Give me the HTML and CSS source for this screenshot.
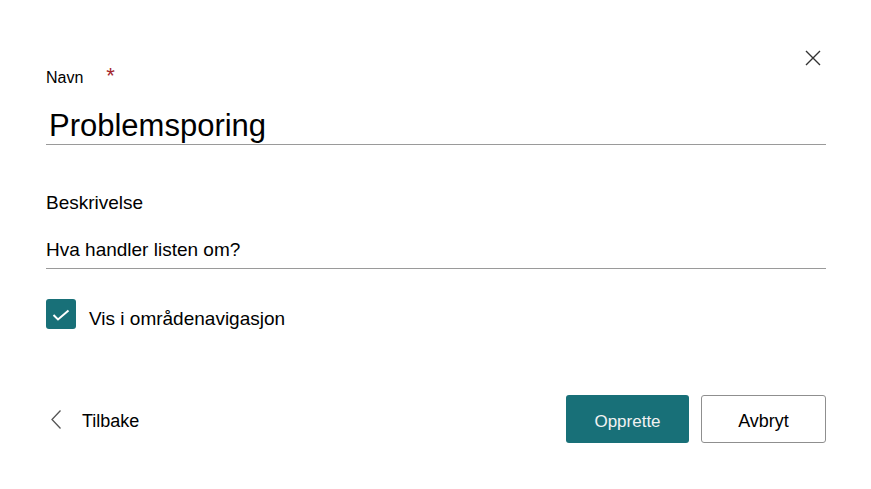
FILE: index.html
```html
<!DOCTYPE html>
<html lang="no">
<head>
<meta charset="utf-8">
<title>Opprett liste</title>
<link rel="stylesheet" href="styles.css">
</head>
<body>
<div class="dialog">
  <button class="close" aria-label="Lukk">
    <svg width="16" height="16" viewBox="0 0 16 16"><path d="M1 1L15 15M15 1L1 15" stroke="#333" stroke-width="1.4" fill="none"/></svg>
  </button>
  <div class="label-row"><span class="label">Navn</span><span class="req">*</span></div>
  <div class="field field-name">Problemsporing</div>
  <div class="label label-desc">Beskrivelse</div>
  <div class="field field-desc">Hva handler listen om?</div>
  <div class="check-row">
    <span class="checkbox">
      <svg width="30" height="30" viewBox="0 0 30 30"><polyline points="7.5,16 12,20.5 22.5,11.5" stroke="#fff" stroke-width="2" fill="none"/></svg>
    </span>
    <span class="check-text">Vis i områdenavigasjon</span>
  </div>
  <div class="footer">
    <button class="back">
      <svg width="10" height="19" viewBox="0 0 10 19"><polyline points="9.5,0.5 1,9.5 9.5,18.5" stroke="#555" stroke-width="1.3" fill="none"/></svg>
      <span>Tilbake</span>
    </button>
    <div class="actions">
      <button class="btn primary">Opprette</button>
      <button class="btn secondary">Avbryt</button>
    </div>
  </div>
</div>
</body>
</html>
```
FILE: styles.css
```css
html, body {
  margin: 0;
  padding: 0;
  background: #fff;
}
body {
  font-family: "Liberation Sans", Arial, sans-serif;
  color: #000;
}
.dialog {
  position: relative;
  width: 871px;
  height: 489px;
  box-sizing: border-box;
  padding: 68px 45px 0 46px;
}
.close {
  position: absolute;
  top: 50px;
  left: 805px;
  width: 16px;
  height: 16px;
  padding: 0;
  border: 0;
  background: none;
  display: flex;
}
.label-row {
  display: flex;
  align-items: flex-start;
  height: 20px;
}
.label {
  font-size: 16px;
  line-height: 20px;
}
.req {
  color: #a4262c;
  font-size: 22px;
  line-height: 20px;
  margin-left: 23px;
  margin-top: -2px;
}
.field {
  border-bottom: 1px solid #9a9a9a;
}
.field-name {
  margin-top: 20px;
  padding-left: 3px;
  font-size: 31px;
  line-height: 36px;
}
.label-desc {
  margin-top: 46px;
  font-size: 19px;
  line-height: 24px;
}
.field-desc {
  margin-top: 23px;
  font-size: 19px;
  line-height: 24px;
  padding-bottom: 6px;
}
.check-row {
  margin-top: 30px;
  display: flex;
  align-items: flex-start;
}
.checkbox {
  width: 30px;
  height: 30px;
  border-radius: 3px;
  background: #187078;
  display: flex;
}
.check-text {
  margin-left: 13px;
  margin-top: 8px;
  font-size: 19px;
  line-height: 24px;
}
.footer {
  margin-top: 64px;
  display: flex;
  justify-content: space-between;
  align-items: center;
}
.back {
  display: flex;
  align-items: center;
  border: 0;
  background: none;
  padding: 0 0 0 5px;
  font-family: inherit;
  font-size: 18px;
  color: #000;
}
.back span {
  margin-left: 21px;
  line-height: 22px;
  padding-top: 4px;
}
.back svg {
  margin-top: 0;
}
.actions {
  display: flex;
  gap: 12px;
}
.btn {
  height: 48px;
  box-sizing: border-box;
  font-family: inherit;
  border-radius: 3px;
  padding: 5px 0 0 0;
}
.primary {
  width: 123px;
  background: #187078;
  border: 0;
  color: #f2f2f2;
  font-size: 17px;
}
.secondary {
  width: 125px;
  background: #fff;
  border: 1px solid #8f8f8f;
  color: #000;
  font-size: 18px;
}
```
